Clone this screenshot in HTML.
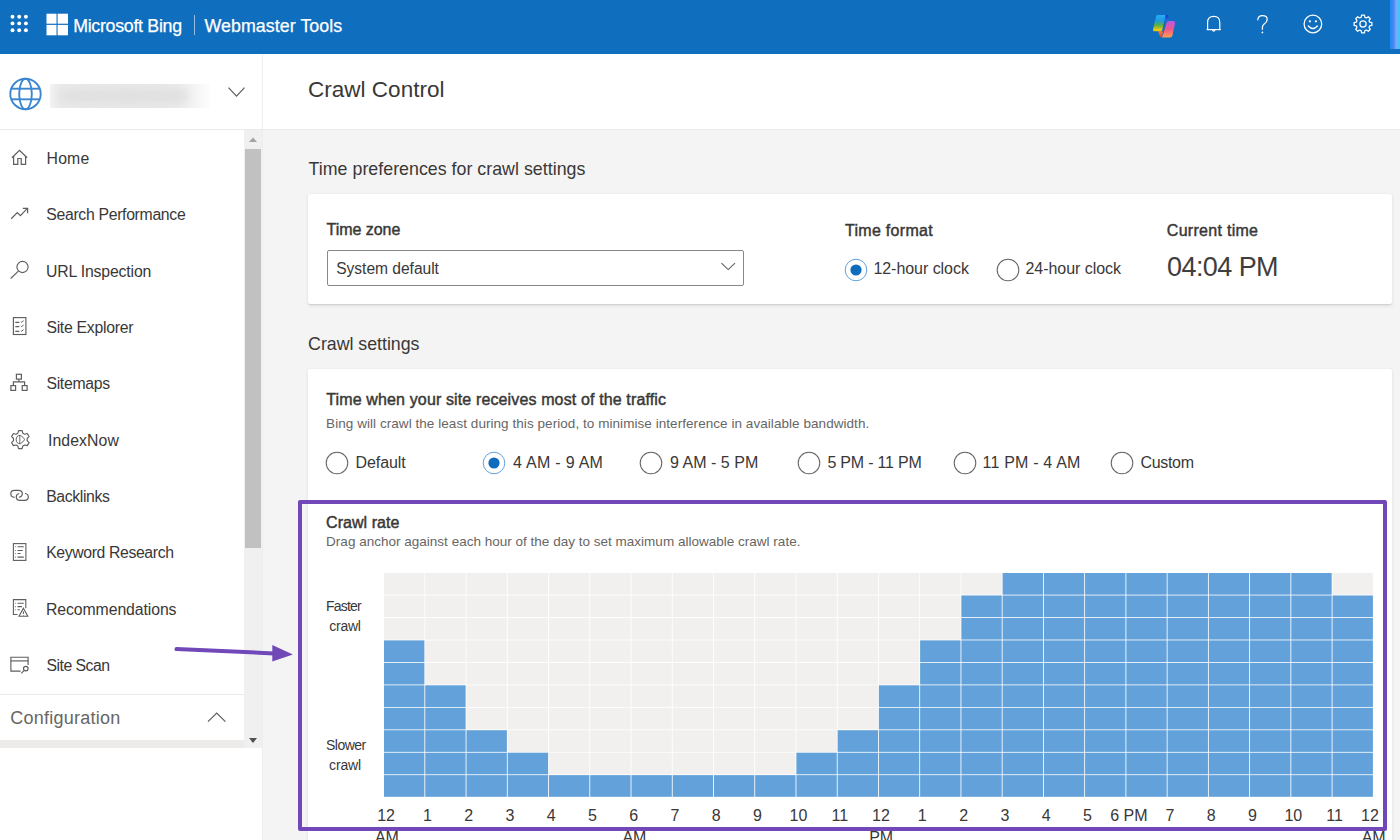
<!DOCTYPE html>
<html><head><meta charset="utf-8"><style>
html,body{margin:0;padding:0;width:1400px;height:840px;overflow:hidden;background:#fff}
body{position:relative;font-family:"Liberation Sans",sans-serif}
.t{position:absolute;white-space:nowrap;line-height:normal}
.card{position:absolute;background:#fff;border-radius:2px;box-shadow:0 0.3px 0.9px rgba(0,0,0,0.08),0 1.6px 3.6px rgba(0,0,0,0.09)}
svg{overflow:visible}
</style></head><body>
<div style="position:absolute;left:0;top:0;width:1400px;height:54px;background:#106ebe"></div>
<div style="position:absolute;left:1390px;top:0;width:10px;height:48.5px;background:linear-gradient(90deg,#1e8af0 0%,#4a84f5 35%,#74b0fa 65%,#2ecbfc 100%)"></div>
<svg style="position:absolute;left:0;top:0" width="40" height="54"><circle cx="12.5" cy="16.8" r="1.95" fill="#fff"/><circle cx="19.2" cy="16.8" r="1.95" fill="#fff"/><circle cx="25.9" cy="16.8" r="1.95" fill="#fff"/><circle cx="12.5" cy="23.4" r="1.95" fill="#fff"/><circle cx="19.2" cy="23.4" r="1.95" fill="#fff"/><circle cx="25.9" cy="23.4" r="1.95" fill="#fff"/><circle cx="12.5" cy="30.2" r="1.95" fill="#fff"/><circle cx="19.2" cy="30.2" r="1.95" fill="#fff"/><circle cx="25.9" cy="30.2" r="1.95" fill="#fff"/></svg>
<svg style="position:absolute;left:46px;top:13px" width="24" height="24"><rect x="0.5" y="0.7" width="10" height="10" fill="#fff"/><rect x="11.6" y="0.7" width="10.4" height="10" fill="#fff"/><rect x="0.5" y="11.9" width="10" height="10.4" fill="#fff"/><rect x="11.6" y="11.9" width="10.4" height="10.4" fill="#fff"/></svg>
<div class="t" style="left:73.20px;top:16.00px;font-size:17.8px;color:#fff;letter-spacing:-0.292px;-webkit-text-stroke:0.25px #fff;">Microsoft Bing</div>
<div style="position:absolute;left:193.5px;top:14.6px;width:1px;height:20.5px;background:rgba(255,255,255,0.55)"></div>
<div class="t" style="left:204.50px;top:16.00px;font-size:17.8px;color:#fff;letter-spacing:0.071px;-webkit-text-stroke:0.25px #fff;">Webmaster Tools</div>
<div style="position:absolute;left:0;top:54px;width:262px;height:786px;background:#fff"></div>
<div style="position:absolute;left:0;top:128.5px;width:262px;height:1px;background:#edebe9"></div>
<div style="position:absolute;left:262px;top:54px;width:1px;height:786px;background:#eeeeee"></div>
<div style="position:absolute;left:244px;top:129.5px;width:18px;height:618.5px;background:#f0f0f0"></div>
<div style="position:absolute;left:245px;top:149px;width:16px;height:399px;background:#c1c1c1"></div>
<svg style="position:absolute;left:244px;top:130px" width="18" height="20"><path d="M5,12 L9,7.5 L13,12 Z" fill="#a3a3a3"/></svg>
<svg style="position:absolute;left:244px;top:730px" width="18" height="18"><path d="M5,8 L13,8 L9,13 Z" fill="#505050"/></svg>
<div style="position:absolute;left:0;top:694px;width:244px;height:1px;background:#edebe9"></div>
<div style="position:absolute;left:0;top:740px;width:244px;height:8px;background:#edebe9"></div>
<div class="t" style="left:10.20px;top:708.00px;font-size:18px;color:#676665;letter-spacing:0.258px;">Configuration</div>
<svg style="position:absolute;left:200px;top:705px" width="34" height="24"><path d="M8,16.6 L16.7,8 L25.4,16.6" fill="none" stroke="#605e5c" stroke-width="1.2"/></svg>
<svg style="position:absolute;left:8px;top:76px" width="36" height="36" viewBox="0 0 36 36"><g fill="none" stroke="#3b87d1" stroke-width="1.9"><circle cx="17.5" cy="18" r="15.2"/><ellipse cx="17.5" cy="18" rx="6.3" ry="15.2"/><line x1="3.6" y1="12.7" x2="31.4" y2="12.7"/><line x1="3.6" y1="23.3" x2="31.4" y2="23.3"/></g></svg>
<div style="position:absolute;left:49.7px;top:83.7px;width:160.5px;height:24.5px;background:linear-gradient(90deg,#f3f3f3 0%,#ebebeb 6%,#e8e8e8 50%,#ebebeb 80%,#fdfdfd 100%);overflow:hidden"><div style="position:absolute;left:8px;top:5px;width:130px;height:14px;border-radius:7px;background:#e0e0e0;filter:blur(5px)"></div></div>
<svg style="position:absolute;left:224px;top:82px" width="26" height="20"><path d="M4.5,5.6 L12.5,14.2 L20.5,5.6" fill="none" stroke="#605e5c" stroke-width="1.2"/></svg>
<div class="t" style="left:46.60px;top:150.00px;font-size:15.8px;color:#393837;letter-spacing:0.167px;">Home</div>
<div class="t" style="left:46.30px;top:206.00px;font-size:15.8px;color:#393837;letter-spacing:-0.324px;">Search Performance</div>
<div class="t" style="left:45.90px;top:263.00px;font-size:15.8px;color:#393837;letter-spacing:-0.154px;">URL Inspection</div>
<div class="t" style="left:46.40px;top:319.00px;font-size:15.8px;color:#393837;letter-spacing:-0.283px;">Site Explorer</div>
<div class="t" style="left:46.40px;top:375.00px;font-size:15.8px;color:#393837;letter-spacing:-0.300px;">Sitemaps</div>
<div class="t" style="left:47.90px;top:432.00px;font-size:15.8px;color:#393837;letter-spacing:0.100px;">IndexNow</div>
<div class="t" style="left:46.20px;top:488.00px;font-size:15.8px;color:#393837;letter-spacing:-0.375px;">Backlinks</div>
<div class="t" style="left:46.20px;top:544.00px;font-size:15.8px;color:#393837;letter-spacing:-0.380px;">Keyword Research</div>
<div class="t" style="left:46.00px;top:601.00px;font-size:15.8px;color:#393837;letter-spacing:-0.086px;">Recommendations</div>
<div class="t" style="left:46.60px;top:657.00px;font-size:15.8px;color:#393837;letter-spacing:-0.537px;">Site Scan</div>
<svg style="position:absolute;left:5px;top:145px" width="30" height="30" viewBox="0 0 30 30"><g fill="none" stroke="#5f5e5c" stroke-width="1.2" stroke-linejoin="miter" stroke-linecap="butt"><path d="M6.9,12.7 L14.5,5.3 L22.1,12.7"/><path d="M8.6,11.2 V19.4 H12.8 V13.5 H16.2 V19.4 H20.6 V11.2"/></g></svg>
<svg style="position:absolute;left:5px;top:200px" width="30" height="30" viewBox="0 0 30 30"><g fill="none" stroke="#5f5e5c" stroke-width="1.25" stroke-linejoin="miter" stroke-linecap="butt"><path d="M6.2,18.8 L12.3,12.6 L15.4,15.6 L22.4,8.4"/><path d="M17.8,8.3 H22.6 V13.2"/></g></svg>
<svg style="position:absolute;left:5px;top:255px" width="30" height="30" viewBox="0 0 30 30"><g fill="none" stroke="#5f5e5c" stroke-width="1.15" stroke-linejoin="miter" stroke-linecap="butt"><circle cx="17.5" cy="12" r="5.6"/><path d="M13.4,16.2 L5.7,23.5"/></g></svg>
<svg style="position:absolute;left:5px;top:312px" width="30" height="30" viewBox="0 0 30 30"><g fill="none" stroke="#5f5e5c" stroke-width="1.15" stroke-linejoin="miter" stroke-linecap="butt"><rect x="8.4" y="5.6" width="12.5" height="16.9"/><path d="M10.3,10.4 H14.3 M10.3,14.6 H14.3 M10.3,19.3 H14.3"/><path d="M15.8,9.6 L16.7,10.3 L18.6,8.6 M15.8,14 L16.7,14.6 L18.6,13 M15.8,18.6 L16.7,19.2 L18.6,17.6" stroke-width="1"/></g></svg>
<svg style="position:absolute;left:5px;top:368px" width="30" height="30" viewBox="0 0 30 30"><g fill="none" stroke="#5f5e5c" stroke-width="1.2" stroke-linejoin="miter" stroke-linecap="butt"><rect x="11.4" y="6.3" width="5" height="4.8"/><path d="M13.9,11.1 V13.9 M8.4,17.6 V13.9 H19.6 V17.6"/><rect x="5.9" y="17.6" width="4.7" height="4.8"/><rect x="17.2" y="17.6" width="4.9" height="4.8"/></g></svg>
<svg style="position:absolute;left:5px;top:425px" width="30" height="30" viewBox="0 0 30 30"><g fill="none" stroke="#5f5e5c" stroke-width="1.15" stroke-linejoin="miter" stroke-linecap="butt"><path d="M12.88,8.16 L13.59,5.57 L17.11,5.57 L17.82,8.16 L19.69,9.24 L22.29,8.56 L24.05,11.60 L22.17,13.52 L22.17,15.68 L24.05,17.60 L22.29,20.64 L19.69,19.96 L17.82,21.04 L17.11,23.63 L13.59,23.63 L12.88,21.04 L11.01,19.96 L8.41,20.64 L6.65,17.60 L8.53,15.68 L8.53,13.52 L6.65,11.60 L8.41,8.56 L11.01,9.24Z" stroke-linejoin="round"/><path d="M15.4,10.4 Q16,10.4 16.5,10.9 L19.2,13.8 Q19.7,14.5 19.2,15.2 L16.5,18.1 Q16,18.7 15.4,18.7 Q11.2,18.7 11.2,14.5 Q11.2,10.4 15.4,10.4 Z" stroke-width="1"/><path d="M14.8,10.6 V18.5" stroke-width="0.9"/></g></svg>
<svg style="position:absolute;left:5px;top:481px" width="30" height="30" viewBox="0 0 30 30"><g fill="none" stroke="#5f5e5c" stroke-width="1.2" stroke-linejoin="miter" stroke-linecap="butt"><path d="M9.6,16.3 C6.8,16.3 5.8,14.6 5.8,12.8 C5.8,10.8 7.2,9.4 9.4,9.4 H13.6 C15.8,9.4 17.3,10.8 17.3,12.8 C17.3,14.8 15.8,16 14,16.3"/><path d="M14.3,12.5 C12.4,12.7 11.3,14.2 11.3,16 C11.3,18 12.8,19.4 15,19.4 H19.6 C21.8,19.4 23.3,18 23.3,16 C23.3,14.2 22.1,12.7 19.9,12.5"/></g></svg>
<svg style="position:absolute;left:5px;top:538px" width="30" height="30" viewBox="0 0 30 30"><g fill="none" stroke="#5f5e5c" stroke-width="1.1" stroke-linejoin="miter" stroke-linecap="butt"><rect x="8.4" y="5.6" width="12.5" height="16.8"/><path d="M12.5,8.8 H18.8 M12.5,12.5 H17.8 M12.5,15.5 H15.6 M12.5,19.1 H18.8"/><path d="M10.2,8.8 H10.9 M10.2,12.5 H10.9 M10.2,15.5 H10.9 M10.2,19.1 H10.9"/></g></svg>
<svg style="position:absolute;left:5px;top:594px" width="30" height="30" viewBox="0 0 30 30"><g fill="none" stroke="#5f5e5c" stroke-width="1.1" stroke-linejoin="miter" stroke-linecap="butt"><path d="M12.5,20.5 H8.4 V5.6 H20.8 V14.3"/><path d="M12.5,9.2 H18.8 M12.5,12.6 H17 M12.5,15.7 H14.8"/><path d="M10.2,9.2 H10.9 M10.2,12.6 H10.9 M10.2,15.7 H10.9"/><path d="M18.4,14.2 L22.8,22.3 H14 Z"/><path d="M18.4,17.3 V20 M18.4,21 V21.6" stroke-width="1"/></g></svg>
<svg style="position:absolute;left:5px;top:650px" width="30" height="30" viewBox="0 0 30 30"><g fill="none" stroke="#5f5e5c" stroke-width="1.15" stroke-linejoin="miter" stroke-linecap="butt"><path d="M15.6,21.1 H5.9 V7.2 H23.1 V15.1"/><path d="M5.9,10.9 H23.1"/><circle cx="20.8" cy="18.6" r="2.3"/><path d="M19.2,20.3 L16.2,23.4"/></g></svg>
<svg style="position:absolute;left:1148px;top:10px" width="32" height="32" viewBox="0 0 32 32">
<defs>
<linearGradient id="cpa" x1="0" y1="5" x2="0" y2="21.3" gradientUnits="userSpaceOnUse"><stop offset="0" stop-color="#22b0f4"/><stop offset="0.35" stop-color="#1e9ae0"/><stop offset="0.62" stop-color="#58b04a"/><stop offset="0.9" stop-color="#e8c80e"/><stop offset="1" stop-color="#f4c800"/></linearGradient>
<linearGradient id="cpb" x1="0" y1="11" x2="0" y2="27.4" gradientUnits="userSpaceOnUse"><stop offset="0" stop-color="#b45ae8"/><stop offset="0.5" stop-color="#f2558a"/><stop offset="1" stop-color="#fca050"/></linearGradient>
<linearGradient id="cpc" x1="0" y1="5" x2="0" y2="11" gradientUnits="userSpaceOnUse"><stop offset="0" stop-color="#1532c8"/><stop offset="1" stop-color="#2a70ee"/></linearGradient>
<linearGradient id="cpd" x1="0" y1="21" x2="0" y2="27.4" gradientUnits="userSpaceOnUse"><stop offset="0" stop-color="#fb7a38"/><stop offset="1" stop-color="#e8402a"/></linearGradient>
</defs>
<path d="M16.4,5 H18.9 Q21,5.1 20.6,7.6 L19.9,10.8 H15.6 Z" fill="url(#cpc)"/>
<path d="M9.6,5 H17.6 L14.3,19.8 Q13.9,21.3 12.4,21.3 H6.4 Q4.6,21.2 5,19.2 L7.9,7.2 Q8.4,5.1 9.6,5 Z" fill="url(#cpa)"/>
<path d="M10.2,21.3 H14.8 L14.3,27.4 H13.5 Q12,27.3 11.3,25 Z" fill="url(#cpd)"/>
<path d="M21,11 H25.3 Q27.4,11.1 27,13.3 L24.4,25.4 Q23.9,27.4 22,27.4 H14.2 L18.5,12.8 Q19.1,11 21,11 Z" fill="url(#cpb)"/>
</svg>
<svg style="position:absolute;left:1203px;top:13px" width="22" height="22" viewBox="0 0 22 22"><g fill="none" stroke="#fff" stroke-width="1.2" stroke-linejoin="round"><path d="M4.6,16.3 V9.4 Q4.6,3.4 10.7,3.4 Q16.8,3.4 16.8,9.4 V16.3"/><path d="M3.6,16.6 H17.8"/><path d="M9.2,16.8 Q10.7,19.6 12.2,16.8"/></g></svg>
<svg style="position:absolute;left:1252px;top:13px" width="22" height="22" viewBox="0 0 22 22"><g fill="none" stroke="#fff" stroke-width="1.25" stroke-linecap="round"><path d="M5.8,6.8 Q6,2.6 10.4,2.6 Q15.3,2.6 15.2,6.6 Q15.1,9.2 12.2,11 Q10.4,12.2 10.4,14.6 V16.3"/></g><circle cx="10.4" cy="19.4" r="0.9" fill="#fff"/></svg>
<svg style="position:absolute;left:1301px;top:12px" width="24" height="24" viewBox="0 0 24 24"><g fill="none" stroke="#fff" stroke-width="1.3"><circle cx="11.9" cy="12" r="8.8"/><path d="M7.4,14 Q11.9,19 16.4,14" stroke-linecap="round"/></g><circle cx="8.9" cy="9.3" r="1.1" fill="#fff"/><circle cx="14.9" cy="9.3" r="1.1" fill="#fff"/></svg>
<svg style="position:absolute;left:1350.5px;top:12px" width="24" height="24" viewBox="0 0 24 24"><g fill="none" stroke="#fff" stroke-width="1.25" stroke-linejoin="round"><path d="M10.10,5.37 L10.59,3.11 L13.41,3.11 L13.90,5.37 L15.35,5.97 L17.29,4.72 L19.28,6.71 L18.03,8.65 L18.63,10.10 L20.89,10.59 L20.89,13.41 L18.63,13.90 L18.03,15.35 L19.28,17.29 L17.29,19.28 L15.35,18.03 L13.90,18.63 L13.41,20.89 L10.59,20.89 L10.10,18.63 L8.65,18.03 L6.71,19.28 L4.72,17.29 L5.97,15.35 L5.37,13.90 L3.11,13.41 L3.11,10.59 L5.37,10.10 L5.97,8.65 L4.72,6.71 L6.71,4.72 L8.65,5.97Z"/><circle cx="12" cy="12" r="3.1"/></g></svg>
<div style="position:absolute;left:263px;top:54px;width:1137px;height:74.5px;background:#fff"></div>
<div style="position:absolute;left:263px;top:128.5px;width:1137px;height:1px;background:#edebe9"></div>
<div style="position:absolute;left:263px;top:129.5px;width:1137px;height:710.5px;background:#f4f4f4"></div>
<div class="t" style="left:307.90px;top:77.00px;font-size:22.5px;color:#393837;letter-spacing:0.033px;">Crawl Control</div>
<div class="t" style="left:308.60px;top:159.00px;font-size:17.8px;color:#393837;letter-spacing:0.021px;">Time preferences for crawl settings</div>
<div class="card" style="left:308px;top:193.5px;width:1084px;height:110px"></div>
<div class="t" style="left:326.50px;top:221.00px;font-size:16px;color:#393837;letter-spacing:-0.038px;-webkit-text-stroke:0.45px #393837;">Time zone</div>
<div style="position:absolute;left:326.5px;top:249.5px;width:415.5px;height:34px;border:1px solid #8a8886;border-radius:2px;background:#fff"></div>
<div class="t" style="left:336.20px;top:260.00px;font-size:15.6px;color:#393837;letter-spacing:-0.031px;">System default</div>
<svg style="position:absolute;left:716px;top:258px" width="24" height="16"><path d="M5.4,5.2 L12.2,11.6 L19,5.2" fill="none" stroke="#605e5c" stroke-width="1.1"/></svg>
<div class="t" style="left:845.00px;top:222.00px;font-size:16px;color:#393837;letter-spacing:0.290px;-webkit-text-stroke:0.45px #393837;">Time format</div>
<div class="t" style="left:1166.80px;top:222.00px;font-size:16px;color:#393837;letter-spacing:0.291px;-webkit-text-stroke:0.45px #393837;">Current time</div>
<div class="t" style="left:1167.00px;top:252.00px;font-size:27px;color:#3f3e3d;letter-spacing:-0.571px;">04:04 PM</div>
<svg style="position:absolute;left:843.8px;top:257.5px" width="24" height="24"><circle cx="12" cy="12" r="10.8" fill="#fff" stroke="#5b9bd9" stroke-width="0.95"/><circle cx="12" cy="12" r="5.6" fill="#0f6cbd"/></svg>
<div class="t" style="left:873.40px;top:260.00px;font-size:16px;color:#393837;letter-spacing:-0.042px;">12-hour clock</div>
<svg style="position:absolute;left:995.8px;top:257.5px" width="24" height="24"><circle cx="12" cy="12" r="10.8" fill="#fff" stroke="#666564" stroke-width="1.05"/></svg>
<div class="t" style="left:1025.50px;top:260.00px;font-size:16px;color:#393837;letter-spacing:-0.042px;">24-hour clock</div>
<div class="t" style="left:308.10px;top:334.00px;font-size:17.8px;color:#393837;letter-spacing:-0.023px;">Crawl settings</div>
<div class="card" style="left:308px;top:369px;width:1084px;height:480px"></div>
<div class="t" style="left:326.30px;top:391.00px;font-size:16px;color:#393837;letter-spacing:0.132px;-webkit-text-stroke:0.45px #393837;">Time when your site receives most of the traffic</div>
<div class="t" style="left:326.10px;top:416.00px;font-size:13.5px;color:#676665;letter-spacing:0.055px;">Bing will crawl the least during this period, to minimise interference in available bandwidth.</div>
<svg style="position:absolute;left:325.4px;top:450.6px" width="24" height="24"><circle cx="12" cy="12" r="10.8" fill="#fff" stroke="#666564" stroke-width="1.05"/></svg>
<div class="t" style="left:355.40px;top:454.00px;font-size:16px;color:#393837;letter-spacing:-0.050px;">Default</div>
<svg style="position:absolute;left:482.2px;top:450.6px" width="24" height="24"><circle cx="12" cy="12" r="10.8" fill="#fff" stroke="#5b9bd9" stroke-width="0.95"/><circle cx="12" cy="12" r="5.6" fill="#0f6cbd"/></svg>
<div class="t" style="left:513.10px;top:454.00px;font-size:16px;color:#393837;letter-spacing:0.270px;">4 AM - 9 AM</div>
<svg style="position:absolute;left:639.3px;top:450.6px" width="24" height="24"><circle cx="12" cy="12" r="10.8" fill="#fff" stroke="#666564" stroke-width="1.05"/></svg>
<div class="t" style="left:669.90px;top:454.00px;font-size:16px;color:#393837;letter-spacing:0.040px;">9 AM - 5 PM</div>
<svg style="position:absolute;left:796.6999999999999px;top:450.6px" width="24" height="24"><circle cx="12" cy="12" r="10.8" fill="#fff" stroke="#666564" stroke-width="1.05"/></svg>
<div class="t" style="left:827.40px;top:454.00px;font-size:16px;color:#393837;letter-spacing:-0.209px;">5 PM - 11 PM</div>
<svg style="position:absolute;left:952.5px;top:450.6px" width="24" height="24"><circle cx="12" cy="12" r="10.8" fill="#fff" stroke="#666564" stroke-width="1.05"/></svg>
<div class="t" style="left:982.60px;top:454.00px;font-size:16px;color:#393837;letter-spacing:0.182px;">11 PM - 4 AM</div>
<svg style="position:absolute;left:1109.9px;top:450.6px" width="24" height="24"><circle cx="12" cy="12" r="10.8" fill="#fff" stroke="#666564" stroke-width="1.05"/></svg>
<div class="t" style="left:1140.40px;top:454.00px;font-size:16px;color:#393837;letter-spacing:-0.300px;">Custom</div>
<div class="t" style="left:326.10px;top:514.00px;font-size:16px;color:#393837;letter-spacing:0.033px;-webkit-text-stroke:0.45px #393837;">Crawl rate</div>
<div class="t" style="left:326.10px;top:534.00px;font-size:13.5px;color:#676665;letter-spacing:0.011px;">Drag anchor against each hour of the day to set maximum allowable crawl rate.</div>
<svg style="position:absolute;left:383.8px;top:573.1px" width="989.76" height="224.60000000000002"><rect x="0.00" y="0.00" width="40.39" height="21.66" fill="#f1f0ef"/><rect x="0.00" y="22.46" width="40.39" height="21.66" fill="#f1f0ef"/><rect x="0.00" y="44.92" width="40.39" height="21.66" fill="#f1f0ef"/><rect x="0.00" y="67.38" width="40.39" height="21.66" fill="#62a1d9"/><rect x="0.00" y="89.84" width="40.39" height="21.66" fill="#62a1d9"/><rect x="0.00" y="112.30" width="40.39" height="21.66" fill="#62a1d9"/><rect x="0.00" y="134.76" width="40.39" height="21.66" fill="#62a1d9"/><rect x="0.00" y="157.22" width="40.39" height="21.66" fill="#62a1d9"/><rect x="0.00" y="179.68" width="40.39" height="21.66" fill="#62a1d9"/><rect x="0.00" y="202.14" width="40.39" height="21.66" fill="#62a1d9"/><rect x="41.24" y="0.00" width="40.39" height="21.66" fill="#f1f0ef"/><rect x="41.24" y="22.46" width="40.39" height="21.66" fill="#f1f0ef"/><rect x="41.24" y="44.92" width="40.39" height="21.66" fill="#f1f0ef"/><rect x="41.24" y="67.38" width="40.39" height="21.66" fill="#f1f0ef"/><rect x="41.24" y="89.84" width="40.39" height="21.66" fill="#f1f0ef"/><rect x="41.24" y="112.30" width="40.39" height="21.66" fill="#62a1d9"/><rect x="41.24" y="134.76" width="40.39" height="21.66" fill="#62a1d9"/><rect x="41.24" y="157.22" width="40.39" height="21.66" fill="#62a1d9"/><rect x="41.24" y="179.68" width="40.39" height="21.66" fill="#62a1d9"/><rect x="41.24" y="202.14" width="40.39" height="21.66" fill="#62a1d9"/><rect x="82.48" y="0.00" width="40.39" height="21.66" fill="#f1f0ef"/><rect x="82.48" y="22.46" width="40.39" height="21.66" fill="#f1f0ef"/><rect x="82.48" y="44.92" width="40.39" height="21.66" fill="#f1f0ef"/><rect x="82.48" y="67.38" width="40.39" height="21.66" fill="#f1f0ef"/><rect x="82.48" y="89.84" width="40.39" height="21.66" fill="#f1f0ef"/><rect x="82.48" y="112.30" width="40.39" height="21.66" fill="#f1f0ef"/><rect x="82.48" y="134.76" width="40.39" height="21.66" fill="#f1f0ef"/><rect x="82.48" y="157.22" width="40.39" height="21.66" fill="#62a1d9"/><rect x="82.48" y="179.68" width="40.39" height="21.66" fill="#62a1d9"/><rect x="82.48" y="202.14" width="40.39" height="21.66" fill="#62a1d9"/><rect x="123.72" y="0.00" width="40.39" height="21.66" fill="#f1f0ef"/><rect x="123.72" y="22.46" width="40.39" height="21.66" fill="#f1f0ef"/><rect x="123.72" y="44.92" width="40.39" height="21.66" fill="#f1f0ef"/><rect x="123.72" y="67.38" width="40.39" height="21.66" fill="#f1f0ef"/><rect x="123.72" y="89.84" width="40.39" height="21.66" fill="#f1f0ef"/><rect x="123.72" y="112.30" width="40.39" height="21.66" fill="#f1f0ef"/><rect x="123.72" y="134.76" width="40.39" height="21.66" fill="#f1f0ef"/><rect x="123.72" y="157.22" width="40.39" height="21.66" fill="#f1f0ef"/><rect x="123.72" y="179.68" width="40.39" height="21.66" fill="#62a1d9"/><rect x="123.72" y="202.14" width="40.39" height="21.66" fill="#62a1d9"/><rect x="164.96" y="0.00" width="40.39" height="21.66" fill="#f1f0ef"/><rect x="164.96" y="22.46" width="40.39" height="21.66" fill="#f1f0ef"/><rect x="164.96" y="44.92" width="40.39" height="21.66" fill="#f1f0ef"/><rect x="164.96" y="67.38" width="40.39" height="21.66" fill="#f1f0ef"/><rect x="164.96" y="89.84" width="40.39" height="21.66" fill="#f1f0ef"/><rect x="164.96" y="112.30" width="40.39" height="21.66" fill="#f1f0ef"/><rect x="164.96" y="134.76" width="40.39" height="21.66" fill="#f1f0ef"/><rect x="164.96" y="157.22" width="40.39" height="21.66" fill="#f1f0ef"/><rect x="164.96" y="179.68" width="40.39" height="21.66" fill="#f1f0ef"/><rect x="164.96" y="202.14" width="40.39" height="21.66" fill="#62a1d9"/><rect x="206.20" y="0.00" width="40.39" height="21.66" fill="#f1f0ef"/><rect x="206.20" y="22.46" width="40.39" height="21.66" fill="#f1f0ef"/><rect x="206.20" y="44.92" width="40.39" height="21.66" fill="#f1f0ef"/><rect x="206.20" y="67.38" width="40.39" height="21.66" fill="#f1f0ef"/><rect x="206.20" y="89.84" width="40.39" height="21.66" fill="#f1f0ef"/><rect x="206.20" y="112.30" width="40.39" height="21.66" fill="#f1f0ef"/><rect x="206.20" y="134.76" width="40.39" height="21.66" fill="#f1f0ef"/><rect x="206.20" y="157.22" width="40.39" height="21.66" fill="#f1f0ef"/><rect x="206.20" y="179.68" width="40.39" height="21.66" fill="#f1f0ef"/><rect x="206.20" y="202.14" width="40.39" height="21.66" fill="#62a1d9"/><rect x="247.44" y="0.00" width="40.39" height="21.66" fill="#f1f0ef"/><rect x="247.44" y="22.46" width="40.39" height="21.66" fill="#f1f0ef"/><rect x="247.44" y="44.92" width="40.39" height="21.66" fill="#f1f0ef"/><rect x="247.44" y="67.38" width="40.39" height="21.66" fill="#f1f0ef"/><rect x="247.44" y="89.84" width="40.39" height="21.66" fill="#f1f0ef"/><rect x="247.44" y="112.30" width="40.39" height="21.66" fill="#f1f0ef"/><rect x="247.44" y="134.76" width="40.39" height="21.66" fill="#f1f0ef"/><rect x="247.44" y="157.22" width="40.39" height="21.66" fill="#f1f0ef"/><rect x="247.44" y="179.68" width="40.39" height="21.66" fill="#f1f0ef"/><rect x="247.44" y="202.14" width="40.39" height="21.66" fill="#62a1d9"/><rect x="288.68" y="0.00" width="40.39" height="21.66" fill="#f1f0ef"/><rect x="288.68" y="22.46" width="40.39" height="21.66" fill="#f1f0ef"/><rect x="288.68" y="44.92" width="40.39" height="21.66" fill="#f1f0ef"/><rect x="288.68" y="67.38" width="40.39" height="21.66" fill="#f1f0ef"/><rect x="288.68" y="89.84" width="40.39" height="21.66" fill="#f1f0ef"/><rect x="288.68" y="112.30" width="40.39" height="21.66" fill="#f1f0ef"/><rect x="288.68" y="134.76" width="40.39" height="21.66" fill="#f1f0ef"/><rect x="288.68" y="157.22" width="40.39" height="21.66" fill="#f1f0ef"/><rect x="288.68" y="179.68" width="40.39" height="21.66" fill="#f1f0ef"/><rect x="288.68" y="202.14" width="40.39" height="21.66" fill="#62a1d9"/><rect x="329.92" y="0.00" width="40.39" height="21.66" fill="#f1f0ef"/><rect x="329.92" y="22.46" width="40.39" height="21.66" fill="#f1f0ef"/><rect x="329.92" y="44.92" width="40.39" height="21.66" fill="#f1f0ef"/><rect x="329.92" y="67.38" width="40.39" height="21.66" fill="#f1f0ef"/><rect x="329.92" y="89.84" width="40.39" height="21.66" fill="#f1f0ef"/><rect x="329.92" y="112.30" width="40.39" height="21.66" fill="#f1f0ef"/><rect x="329.92" y="134.76" width="40.39" height="21.66" fill="#f1f0ef"/><rect x="329.92" y="157.22" width="40.39" height="21.66" fill="#f1f0ef"/><rect x="329.92" y="179.68" width="40.39" height="21.66" fill="#f1f0ef"/><rect x="329.92" y="202.14" width="40.39" height="21.66" fill="#62a1d9"/><rect x="371.16" y="0.00" width="40.39" height="21.66" fill="#f1f0ef"/><rect x="371.16" y="22.46" width="40.39" height="21.66" fill="#f1f0ef"/><rect x="371.16" y="44.92" width="40.39" height="21.66" fill="#f1f0ef"/><rect x="371.16" y="67.38" width="40.39" height="21.66" fill="#f1f0ef"/><rect x="371.16" y="89.84" width="40.39" height="21.66" fill="#f1f0ef"/><rect x="371.16" y="112.30" width="40.39" height="21.66" fill="#f1f0ef"/><rect x="371.16" y="134.76" width="40.39" height="21.66" fill="#f1f0ef"/><rect x="371.16" y="157.22" width="40.39" height="21.66" fill="#f1f0ef"/><rect x="371.16" y="179.68" width="40.39" height="21.66" fill="#f1f0ef"/><rect x="371.16" y="202.14" width="40.39" height="21.66" fill="#62a1d9"/><rect x="412.40" y="0.00" width="40.39" height="21.66" fill="#f1f0ef"/><rect x="412.40" y="22.46" width="40.39" height="21.66" fill="#f1f0ef"/><rect x="412.40" y="44.92" width="40.39" height="21.66" fill="#f1f0ef"/><rect x="412.40" y="67.38" width="40.39" height="21.66" fill="#f1f0ef"/><rect x="412.40" y="89.84" width="40.39" height="21.66" fill="#f1f0ef"/><rect x="412.40" y="112.30" width="40.39" height="21.66" fill="#f1f0ef"/><rect x="412.40" y="134.76" width="40.39" height="21.66" fill="#f1f0ef"/><rect x="412.40" y="157.22" width="40.39" height="21.66" fill="#f1f0ef"/><rect x="412.40" y="179.68" width="40.39" height="21.66" fill="#62a1d9"/><rect x="412.40" y="202.14" width="40.39" height="21.66" fill="#62a1d9"/><rect x="453.64" y="0.00" width="40.39" height="21.66" fill="#f1f0ef"/><rect x="453.64" y="22.46" width="40.39" height="21.66" fill="#f1f0ef"/><rect x="453.64" y="44.92" width="40.39" height="21.66" fill="#f1f0ef"/><rect x="453.64" y="67.38" width="40.39" height="21.66" fill="#f1f0ef"/><rect x="453.64" y="89.84" width="40.39" height="21.66" fill="#f1f0ef"/><rect x="453.64" y="112.30" width="40.39" height="21.66" fill="#f1f0ef"/><rect x="453.64" y="134.76" width="40.39" height="21.66" fill="#f1f0ef"/><rect x="453.64" y="157.22" width="40.39" height="21.66" fill="#62a1d9"/><rect x="453.64" y="179.68" width="40.39" height="21.66" fill="#62a1d9"/><rect x="453.64" y="202.14" width="40.39" height="21.66" fill="#62a1d9"/><rect x="494.88" y="0.00" width="40.39" height="21.66" fill="#f1f0ef"/><rect x="494.88" y="22.46" width="40.39" height="21.66" fill="#f1f0ef"/><rect x="494.88" y="44.92" width="40.39" height="21.66" fill="#f1f0ef"/><rect x="494.88" y="67.38" width="40.39" height="21.66" fill="#f1f0ef"/><rect x="494.88" y="89.84" width="40.39" height="21.66" fill="#f1f0ef"/><rect x="494.88" y="112.30" width="40.39" height="21.66" fill="#62a1d9"/><rect x="494.88" y="134.76" width="40.39" height="21.66" fill="#62a1d9"/><rect x="494.88" y="157.22" width="40.39" height="21.66" fill="#62a1d9"/><rect x="494.88" y="179.68" width="40.39" height="21.66" fill="#62a1d9"/><rect x="494.88" y="202.14" width="40.39" height="21.66" fill="#62a1d9"/><rect x="536.12" y="0.00" width="40.39" height="21.66" fill="#f1f0ef"/><rect x="536.12" y="22.46" width="40.39" height="21.66" fill="#f1f0ef"/><rect x="536.12" y="44.92" width="40.39" height="21.66" fill="#f1f0ef"/><rect x="536.12" y="67.38" width="40.39" height="21.66" fill="#62a1d9"/><rect x="536.12" y="89.84" width="40.39" height="21.66" fill="#62a1d9"/><rect x="536.12" y="112.30" width="40.39" height="21.66" fill="#62a1d9"/><rect x="536.12" y="134.76" width="40.39" height="21.66" fill="#62a1d9"/><rect x="536.12" y="157.22" width="40.39" height="21.66" fill="#62a1d9"/><rect x="536.12" y="179.68" width="40.39" height="21.66" fill="#62a1d9"/><rect x="536.12" y="202.14" width="40.39" height="21.66" fill="#62a1d9"/><rect x="577.36" y="0.00" width="40.39" height="21.66" fill="#f1f0ef"/><rect x="577.36" y="22.46" width="40.39" height="21.66" fill="#62a1d9"/><rect x="577.36" y="44.92" width="40.39" height="21.66" fill="#62a1d9"/><rect x="577.36" y="67.38" width="40.39" height="21.66" fill="#62a1d9"/><rect x="577.36" y="89.84" width="40.39" height="21.66" fill="#62a1d9"/><rect x="577.36" y="112.30" width="40.39" height="21.66" fill="#62a1d9"/><rect x="577.36" y="134.76" width="40.39" height="21.66" fill="#62a1d9"/><rect x="577.36" y="157.22" width="40.39" height="21.66" fill="#62a1d9"/><rect x="577.36" y="179.68" width="40.39" height="21.66" fill="#62a1d9"/><rect x="577.36" y="202.14" width="40.39" height="21.66" fill="#62a1d9"/><rect x="618.60" y="0.00" width="40.39" height="21.66" fill="#62a1d9"/><rect x="618.60" y="22.46" width="40.39" height="21.66" fill="#62a1d9"/><rect x="618.60" y="44.92" width="40.39" height="21.66" fill="#62a1d9"/><rect x="618.60" y="67.38" width="40.39" height="21.66" fill="#62a1d9"/><rect x="618.60" y="89.84" width="40.39" height="21.66" fill="#62a1d9"/><rect x="618.60" y="112.30" width="40.39" height="21.66" fill="#62a1d9"/><rect x="618.60" y="134.76" width="40.39" height="21.66" fill="#62a1d9"/><rect x="618.60" y="157.22" width="40.39" height="21.66" fill="#62a1d9"/><rect x="618.60" y="179.68" width="40.39" height="21.66" fill="#62a1d9"/><rect x="618.60" y="202.14" width="40.39" height="21.66" fill="#62a1d9"/><rect x="659.84" y="0.00" width="40.39" height="21.66" fill="#62a1d9"/><rect x="659.84" y="22.46" width="40.39" height="21.66" fill="#62a1d9"/><rect x="659.84" y="44.92" width="40.39" height="21.66" fill="#62a1d9"/><rect x="659.84" y="67.38" width="40.39" height="21.66" fill="#62a1d9"/><rect x="659.84" y="89.84" width="40.39" height="21.66" fill="#62a1d9"/><rect x="659.84" y="112.30" width="40.39" height="21.66" fill="#62a1d9"/><rect x="659.84" y="134.76" width="40.39" height="21.66" fill="#62a1d9"/><rect x="659.84" y="157.22" width="40.39" height="21.66" fill="#62a1d9"/><rect x="659.84" y="179.68" width="40.39" height="21.66" fill="#62a1d9"/><rect x="659.84" y="202.14" width="40.39" height="21.66" fill="#62a1d9"/><rect x="701.08" y="0.00" width="40.39" height="21.66" fill="#62a1d9"/><rect x="701.08" y="22.46" width="40.39" height="21.66" fill="#62a1d9"/><rect x="701.08" y="44.92" width="40.39" height="21.66" fill="#62a1d9"/><rect x="701.08" y="67.38" width="40.39" height="21.66" fill="#62a1d9"/><rect x="701.08" y="89.84" width="40.39" height="21.66" fill="#62a1d9"/><rect x="701.08" y="112.30" width="40.39" height="21.66" fill="#62a1d9"/><rect x="701.08" y="134.76" width="40.39" height="21.66" fill="#62a1d9"/><rect x="701.08" y="157.22" width="40.39" height="21.66" fill="#62a1d9"/><rect x="701.08" y="179.68" width="40.39" height="21.66" fill="#62a1d9"/><rect x="701.08" y="202.14" width="40.39" height="21.66" fill="#62a1d9"/><rect x="742.32" y="0.00" width="40.39" height="21.66" fill="#62a1d9"/><rect x="742.32" y="22.46" width="40.39" height="21.66" fill="#62a1d9"/><rect x="742.32" y="44.92" width="40.39" height="21.66" fill="#62a1d9"/><rect x="742.32" y="67.38" width="40.39" height="21.66" fill="#62a1d9"/><rect x="742.32" y="89.84" width="40.39" height="21.66" fill="#62a1d9"/><rect x="742.32" y="112.30" width="40.39" height="21.66" fill="#62a1d9"/><rect x="742.32" y="134.76" width="40.39" height="21.66" fill="#62a1d9"/><rect x="742.32" y="157.22" width="40.39" height="21.66" fill="#62a1d9"/><rect x="742.32" y="179.68" width="40.39" height="21.66" fill="#62a1d9"/><rect x="742.32" y="202.14" width="40.39" height="21.66" fill="#62a1d9"/><rect x="783.56" y="0.00" width="40.39" height="21.66" fill="#62a1d9"/><rect x="783.56" y="22.46" width="40.39" height="21.66" fill="#62a1d9"/><rect x="783.56" y="44.92" width="40.39" height="21.66" fill="#62a1d9"/><rect x="783.56" y="67.38" width="40.39" height="21.66" fill="#62a1d9"/><rect x="783.56" y="89.84" width="40.39" height="21.66" fill="#62a1d9"/><rect x="783.56" y="112.30" width="40.39" height="21.66" fill="#62a1d9"/><rect x="783.56" y="134.76" width="40.39" height="21.66" fill="#62a1d9"/><rect x="783.56" y="157.22" width="40.39" height="21.66" fill="#62a1d9"/><rect x="783.56" y="179.68" width="40.39" height="21.66" fill="#62a1d9"/><rect x="783.56" y="202.14" width="40.39" height="21.66" fill="#62a1d9"/><rect x="824.80" y="0.00" width="40.39" height="21.66" fill="#62a1d9"/><rect x="824.80" y="22.46" width="40.39" height="21.66" fill="#62a1d9"/><rect x="824.80" y="44.92" width="40.39" height="21.66" fill="#62a1d9"/><rect x="824.80" y="67.38" width="40.39" height="21.66" fill="#62a1d9"/><rect x="824.80" y="89.84" width="40.39" height="21.66" fill="#62a1d9"/><rect x="824.80" y="112.30" width="40.39" height="21.66" fill="#62a1d9"/><rect x="824.80" y="134.76" width="40.39" height="21.66" fill="#62a1d9"/><rect x="824.80" y="157.22" width="40.39" height="21.66" fill="#62a1d9"/><rect x="824.80" y="179.68" width="40.39" height="21.66" fill="#62a1d9"/><rect x="824.80" y="202.14" width="40.39" height="21.66" fill="#62a1d9"/><rect x="866.04" y="0.00" width="40.39" height="21.66" fill="#62a1d9"/><rect x="866.04" y="22.46" width="40.39" height="21.66" fill="#62a1d9"/><rect x="866.04" y="44.92" width="40.39" height="21.66" fill="#62a1d9"/><rect x="866.04" y="67.38" width="40.39" height="21.66" fill="#62a1d9"/><rect x="866.04" y="89.84" width="40.39" height="21.66" fill="#62a1d9"/><rect x="866.04" y="112.30" width="40.39" height="21.66" fill="#62a1d9"/><rect x="866.04" y="134.76" width="40.39" height="21.66" fill="#62a1d9"/><rect x="866.04" y="157.22" width="40.39" height="21.66" fill="#62a1d9"/><rect x="866.04" y="179.68" width="40.39" height="21.66" fill="#62a1d9"/><rect x="866.04" y="202.14" width="40.39" height="21.66" fill="#62a1d9"/><rect x="907.28" y="0.00" width="40.39" height="21.66" fill="#62a1d9"/><rect x="907.28" y="22.46" width="40.39" height="21.66" fill="#62a1d9"/><rect x="907.28" y="44.92" width="40.39" height="21.66" fill="#62a1d9"/><rect x="907.28" y="67.38" width="40.39" height="21.66" fill="#62a1d9"/><rect x="907.28" y="89.84" width="40.39" height="21.66" fill="#62a1d9"/><rect x="907.28" y="112.30" width="40.39" height="21.66" fill="#62a1d9"/><rect x="907.28" y="134.76" width="40.39" height="21.66" fill="#62a1d9"/><rect x="907.28" y="157.22" width="40.39" height="21.66" fill="#62a1d9"/><rect x="907.28" y="179.68" width="40.39" height="21.66" fill="#62a1d9"/><rect x="907.28" y="202.14" width="40.39" height="21.66" fill="#62a1d9"/><rect x="948.52" y="0.00" width="40.39" height="21.66" fill="#f1f0ef"/><rect x="948.52" y="22.46" width="40.39" height="21.66" fill="#62a1d9"/><rect x="948.52" y="44.92" width="40.39" height="21.66" fill="#62a1d9"/><rect x="948.52" y="67.38" width="40.39" height="21.66" fill="#62a1d9"/><rect x="948.52" y="89.84" width="40.39" height="21.66" fill="#62a1d9"/><rect x="948.52" y="112.30" width="40.39" height="21.66" fill="#62a1d9"/><rect x="948.52" y="134.76" width="40.39" height="21.66" fill="#62a1d9"/><rect x="948.52" y="157.22" width="40.39" height="21.66" fill="#62a1d9"/><rect x="948.52" y="179.68" width="40.39" height="21.66" fill="#62a1d9"/><rect x="948.52" y="202.14" width="40.39" height="21.66" fill="#62a1d9"/></svg>
<div class="t" style="left:326.10px;top:598.00px;font-size:14px;color:#393837;letter-spacing:-0.820px;">Faster</div>
<div class="t" style="left:329.30px;top:618.00px;font-size:14px;color:#393837;letter-spacing:-0.275px;">crawl</div>
<div class="t" style="left:325.90px;top:737.00px;font-size:14px;color:#393837;letter-spacing:-0.480px;">Slower</div>
<div class="t" style="left:329.00px;top:757.00px;font-size:14px;color:#393837;letter-spacing:-0.125px;">crawl</div>
<div class="t" style="left:377.20px;top:807.00px;font-size:16px;color:#393837;">12</div>
<div class="t" style="left:422.89px;top:807.00px;font-size:16px;color:#393837;">1</div>
<div class="t" style="left:464.33px;top:807.00px;font-size:16px;color:#393837;">2</div>
<div class="t" style="left:505.62px;top:807.00px;font-size:16px;color:#393837;">3</div>
<div class="t" style="left:546.86px;top:807.00px;font-size:16px;color:#393837;">4</div>
<div class="t" style="left:588.10px;top:807.00px;font-size:16px;color:#393837;">5</div>
<div class="t" style="left:629.24px;top:807.00px;font-size:16px;color:#393837;">6</div>
<div class="t" style="left:670.53px;top:807.00px;font-size:16px;color:#393837;">7</div>
<div class="t" style="left:711.77px;top:807.00px;font-size:16px;color:#393837;">8</div>
<div class="t" style="left:753.01px;top:807.00px;font-size:16px;color:#393837;">9</div>
<div class="t" style="left:789.50px;top:807.00px;font-size:16px;color:#393837;">10</div>
<div class="t" style="left:831.44px;top:807.00px;font-size:16px;color:#393837;">11</div>
<div class="t" style="left:872.08px;top:807.00px;font-size:16px;color:#393837;">12</div>
<div class="t" style="left:917.77px;top:807.00px;font-size:16px;color:#393837;">1</div>
<div class="t" style="left:959.21px;top:807.00px;font-size:16px;color:#393837;">2</div>
<div class="t" style="left:1000.50px;top:807.00px;font-size:16px;color:#393837;">3</div>
<div class="t" style="left:1041.74px;top:807.00px;font-size:16px;color:#393837;">4</div>
<div class="t" style="left:1082.98px;top:807.00px;font-size:16px;color:#393837;">5</div>
<div class="t" style="left:1110.22px;top:807.00px;font-size:16px;color:#393837;">6 PM</div>
<div class="t" style="left:1165.41px;top:807.00px;font-size:16px;color:#393837;">7</div>
<div class="t" style="left:1206.65px;top:807.00px;font-size:16px;color:#393837;">8</div>
<div class="t" style="left:1247.89px;top:807.00px;font-size:16px;color:#393837;">9</div>
<div class="t" style="left:1284.38px;top:807.00px;font-size:16px;color:#393837;">10</div>
<div class="t" style="left:1326.32px;top:807.00px;font-size:16px;color:#393837;">11</div>
<div class="t" style="left:1361.10px;top:807.00px;font-size:16px;color:#393837;">12</div>
<div class="t" style="left:374.95px;top:829.00px;font-size:16px;color:#393837;">AM</div>
<div class="t" style="left:622.39px;top:829.00px;font-size:16px;color:#393837;">AM</div>
<div class="t" style="left:869.18px;top:829.00px;font-size:16px;color:#393837;">PM</div>
<div class="t" style="left:1361.65px;top:829.00px;font-size:16px;color:#393837;">AM</div>
<div style="position:absolute;left:298.2px;top:499.6px;width:1080.8px;height:323.1px;border:4px solid #7048b8;border-radius:2px"></div>
<svg style="position:absolute;left:0;top:0;pointer-events:none" width="1400" height="840"><line x1="176.5" y1="649.1" x2="274" y2="653.4" stroke="#7048b8" stroke-width="4" stroke-linecap="round"/><path d="M272.3,645 L292.9,654.6 L272.3,661.6 Z" fill="#7048b8"/></svg>
</body></html>
